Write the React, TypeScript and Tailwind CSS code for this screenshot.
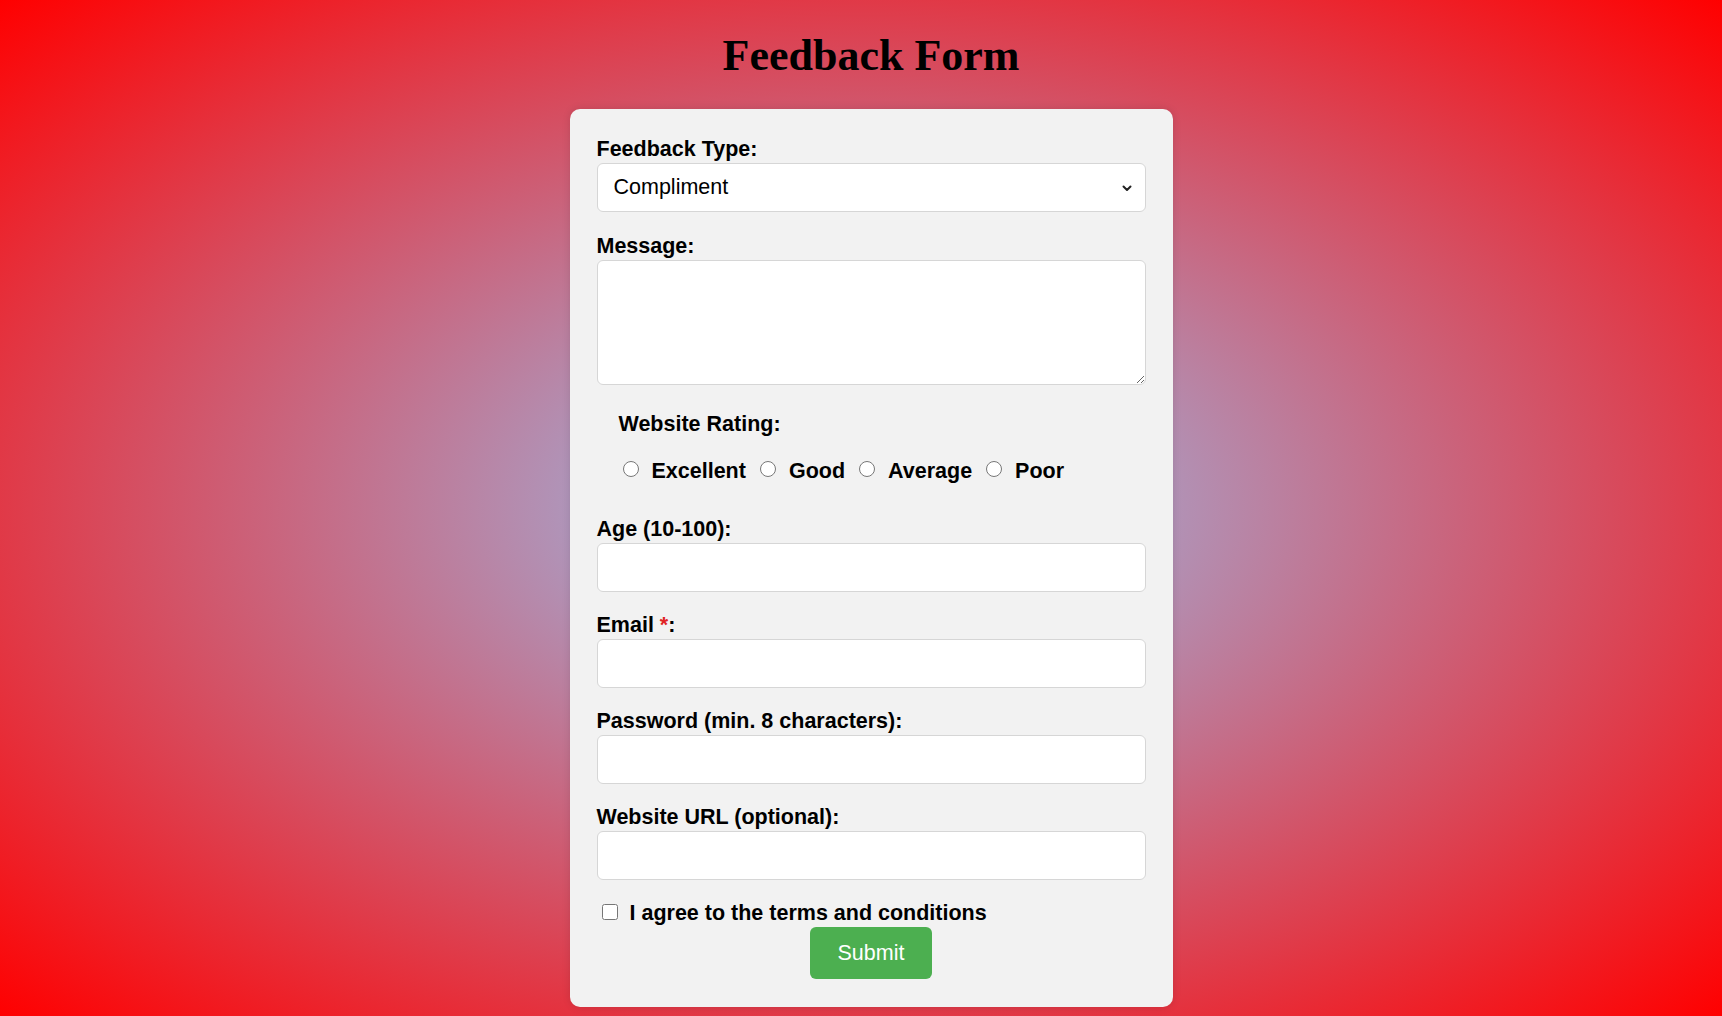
import { useState } from "react";

const ratings = ["Excellent", "Good", "Average", "Poor"];

function Field({
  label,
  children,
  gap = "mb-[21px]",
}: {
  label: React.ReactNode;
  children: React.ReactNode;
  gap?: string;
}) {
  return (
    <div className={gap}>
      <label className="block text-[21.5px] font-bold leading-[25px] mb-[1px]">{label}</label>
      {children}
    </div>
  );
}

const inputCls =
  "block w-full h-[49px] rounded-[6px] border border-[#d6d6d6] bg-white px-[16px] text-[21.5px] outline-none";

export default function App() {
  const [type, setType] = useState("Compliment");

  return (
    <div className="min-h-screen w-full bg-[radial-gradient(#97c3f3,red)] flex flex-col items-center pl-[20px] pt-[31px] pb-[10px] font-['Liberation_Sans',Arial,sans-serif] text-black">
      <h1 className="font-['Liberation_Serif','Times_New_Roman',serif] text-[44px] font-bold leading-[50px]">
        Feedback Form
      </h1>

      <form
        className="mt-[28px] w-[603px] rounded-[10px] bg-[#f2f2f2] px-[27px] pt-[28px] pb-[28px] shadow-[0_0_8px_rgba(0,0,0,0.12)]"
        onSubmit={(e) => e.preventDefault()}
      >
        <Field label="Feedback Type:" gap="mb-[22px]">
          <div className="relative">
            <select
              value={type}
              onChange={(e) => setType(e.target.value)}
              className={inputCls + " appearance-none pr-[40px]"}
            >
              <option>Compliment</option>
              <option>Suggestion</option>
              <option>Complaint</option>
            </select>
            <svg
              className="pointer-events-none absolute right-[13px] top-[19px] h-[12px] w-[12px]"
              viewBox="0 0 12 12"
              fill="none"
              stroke="#222"
              strokeWidth="2"
              strokeLinecap="round"
              strokeLinejoin="round"
            >
              <path d="M2.5 4.5 6 8l3.5-3.5" />
            </svg>
          </div>
        </Field>

        <Field label="Message:" gap="mb-[22px]">
          <textarea className="block w-full h-[125px] rounded-[6px] border border-[#d6d6d6] bg-white px-[16px] py-[10px] text-[21.5px] outline-none" />
        </Field>

        <div className="pl-[22px] pt-[5px] mb-[33px]">
          <div className="text-[21.5px] font-bold leading-[25px]">Website Rating:</div>
          <div className="mt-[21px] flex items-center h-[26px] text-[21.5px] font-bold">
            {ratings.map((r) => (
              <label key={r} className="flex items-center mr-[10px]">
                <input
                  type="radio"
                  name="rating"
                  value={r}
                  className="w-[16px] h-[16px] mt-[-4px] ml-[4px] mr-[13px] accent-[#555]"
                />
                {r}
              </label>
            ))}
          </div>
        </div>

        <Field label="Age (10-100):">
          <input type="number" min={10} max={100} className={inputCls} />
        </Field>

        <Field
          label={
            <>
              Email <span className="text-[#e02424]">*</span>:
            </>
          }
        >
          <input type="email" className={inputCls} />
        </Field>

        <Field label="Password (min. 8 characters):">
          <input type="password" className={inputCls} />
        </Field>

        <Field label="Website URL (optional):">
          <input type="url" className={inputCls} />
        </Field>

        <label className="flex items-center h-[25px] text-[21.5px] font-bold">
          <input type="checkbox" className="w-[16px] h-[16px] mt-[-4px] ml-[5px] mr-[12px]" />
          I agree to the terms and conditions
        </label>

        <div className="flex justify-center mt-[1px]">
          <button
            type="submit"
            className="h-[52px] w-[122px] rounded-[6px] bg-[#4caf50] text-[21.5px] text-white"
          >
            Submit
          </button>
        </div>
      </form>
    </div>
  );
}
